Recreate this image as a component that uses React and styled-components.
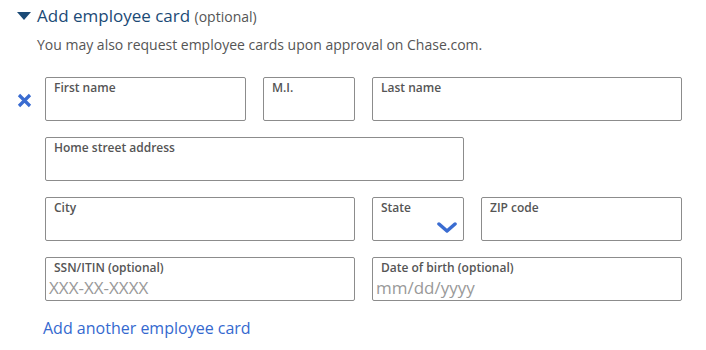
import React from 'react'
import styled, { createGlobalStyle } from 'styled-components'

const GlobalStyle = createGlobalStyle`
  body {
    margin: 0;
    background: #fff;
    font-family: 'Open Sans', 'Noto Sans', sans-serif;
  }
`

const Section = styled.section`
  width: 706px;
  height: 350px;
  box-sizing: border-box;
  padding: 3px 0 0 17px;
  overflow: hidden;
`

const Header = styled.div`
  display: flex;
  align-items: center;
  gap: 6px;
  height: 24px;
`

const Triangle = styled.span`
  width: 0;
  height: 0;
  border-left: 7px solid transparent;
  border-right: 7px solid transparent;
  border-top: 8px solid #1b4a76;
  margin-top: 1px;
`

const Title = styled.h2`
  margin: 0;
  font-size: 17px;
  font-weight: 400;
  color: #1b4a76;
  span {
    font-size: 14px;
    color: #555;
  }
`

const Note = styled.p`
  margin: 8px 0 0 20px;
  font-size: 14px;
  color: #555;
`

const FormArea = styled.div`
  display: flex;
  margin-top: 23px;
`

const RemoveCol = styled.div`
  width: 28px;
  padding-top: 14px;
`

const Grid = styled.div`
  display: grid;
  grid-template-columns: 201px 92px 92px 201px;
  column-gap: 17px;
  row-gap: 16px;
`

const Field = styled.label`
  grid-column: ${(p) => p.span || 'auto'};
  position: relative;
  height: 44px;
  box-sizing: border-box;
  border: 1px solid #8c8c8c;
  border-radius: 2px;
  padding: 1px 8px 0;
  display: flex;
  flex-direction: column;
`

const Label = styled.span`
  font-size: 12px;
  font-weight: 600;
  color: #555;
  line-height: 18px;
`

const Placeholder = styled.span`
  font-size: 17px;
  color: #999;
  line-height: 22px;
  margin-left: -5px;
`

const Chevron = styled.svg`
  position: absolute;
  right: 6px;
  bottom: 6px;
`

const AddLink = styled.a`
  display: inline-block;
  margin: 16px 0 0 26px;
  font-size: 16px;
  color: #3569cf;
  text-decoration: none;
`

const App = () => {
  return (
    <Section>
      <GlobalStyle />
      <Header>
        <Triangle />
        <Title>
          Add employee card <span>(optional)</span>
        </Title>
      </Header>
      <Note>You may also request employee cards upon approval on Chase.com.</Note>
      <FormArea>
        <RemoveCol>
          <svg width="15" height="15" viewBox="0 0 15 15">
            <path d="M2 2 L13 13 M13 2 L2 13" stroke="#3a6cd1" strokeWidth="3.2" strokeLinecap="butt" />
          </svg>
        </RemoveCol>
        <Grid>
          <Field>
            <Label>First name</Label>
          </Field>
          <Field>
            <Label>M.I.</Label>
          </Field>
          <Field span="span 2">
            <Label>Last name</Label>
          </Field>
          <Field span="span 3">
            <Label>Home street address</Label>
          </Field>
          <Field span="1 / span 2">
            <Label>City</Label>
          </Field>
          <Field>
            <Label>State</Label>
            <Chevron width="20" height="12" viewBox="0 0 20 12">
              <path d="M2 2 L10 9 L18 2" fill="none" stroke="#3a6cd1" strokeWidth="3.5" strokeLinecap="round" strokeLinejoin="round" />
            </Chevron>
          </Field>
          <Field>
            <Label>ZIP code</Label>
          </Field>
          <Field span="1 / span 2">
            <Label>SSN/ITIN (optional)</Label>
            <Placeholder>XXX-XX-XXXX</Placeholder>
          </Field>
          <Field span="span 2">
            <Label>Date of birth (optional)</Label>
            <Placeholder>mm/dd/yyyy</Placeholder>
          </Field>
        </Grid>
      </FormArea>
      <AddLink href="#">Add another employee card</AddLink>
    </Section>
  )
}

export default App
